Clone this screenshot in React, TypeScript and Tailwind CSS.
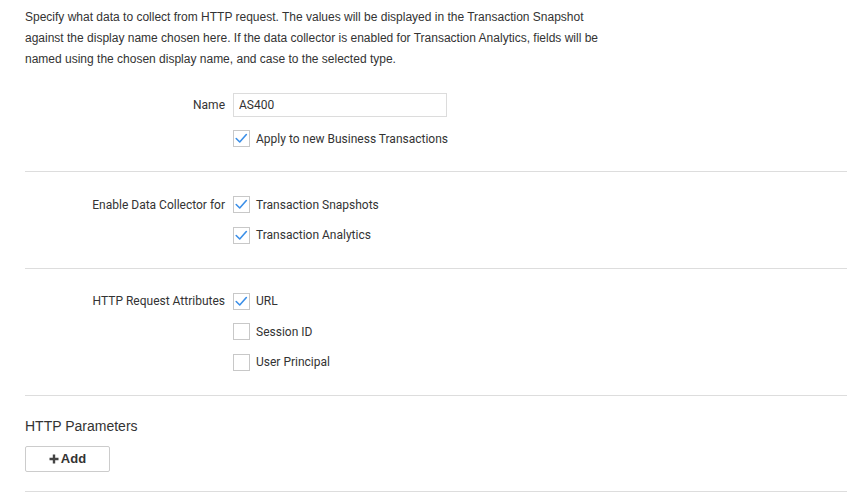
import { useState } from "react";

const LABEL = "w-[208px] shrink-0 pr-2 text-right text-[12px] text-[#333]";

function Check({ checked, label }: { checked: boolean; label: string }) {
  const [on, setOn] = useState(checked);
  return (
    <label className="flex h-[17px] cursor-pointer items-center gap-[6px]" onClick={() => setOn((v) => !v)}>
      <span className="flex h-[17px] w-[17px] shrink-0 items-center justify-center border border-[#c8c8c8] bg-white">
        {on && (
          <svg viewBox="0 0 17 17" className="h-[17px] w-[17px]">
            <polyline
              points="2.5,8.5 6.5,12.5 14,4"
              fill="none"
              stroke="#3b8fe8"
              strokeWidth={1.8}
              strokeLinecap="round"
              strokeLinejoin="round"
            />
          </svg>
        )}
      </span>
      <span className="text-[12px] text-[#333]">{label}</span>
    </label>
  );
}

function Section({ label, items }: { label: string; items: [string, boolean][] }) {
  return (
    <div className="flex border-t border-[#dddddd] pb-[24px] pt-[24px]">
      <div className={`${LABEL} flex h-[17px] items-center justify-end`}>{label}</div>
      <div className="flex flex-col gap-[13.5px]">
        {items.map(([t, c]) => (
          <Check key={t} label={t} checked={c} />
        ))}
      </div>
    </div>
  );
}

export default function App() {
  return (
    <div className="min-h-[503px] bg-white pl-[25px]" style={{ fontFamily: "Roboto, 'Liberation Sans', sans-serif" }}>
      <p
        className="pt-[7px] text-[12px] leading-[21px] text-[#333]"
        style={{ fontFamily: "'Liberation Sans', Arial, sans-serif" }}
      >
        <span className="block">
          Specify what data to collect from HTTP request. The values will be displayed in the Transaction Snapshot
        </span>
        <span className="block">
          against the display name chosen here. If the data collector is enabled for Transaction Analytics, fields will be
        </span>
        <span className="block">named using the chosen display name, and case to the selected type.</span>
      </p>

      <div className="pb-[24px] pt-[23px]">
        <div className="flex items-center">
          <div className={LABEL}>Name</div>
          <input
            defaultValue="AS400"
            className="h-[24px] w-[214px] border border-[#dcdcdc] px-[5px] text-[12px] text-[#333] outline-none"
          />
        </div>
        <div className="mt-[13px] flex">
          <div className="w-[208px] shrink-0" />
          <Check label="Apply to new Business Transactions" checked />
        </div>
      </div>

      <Section
        label="Enable Data Collector for"
        items={[
          ["Transaction Snapshots", true],
          ["Transaction Analytics", true],
        ]}
      />

      <Section
        label="HTTP Request Attributes"
        items={[
          ["URL", true],
          ["Session ID", false],
          ["User Principal", false],
        ]}
      />

      <div className="border-t border-[#dddddd] pb-[19px] pt-[21px]" style={{ fontFamily: "'Liberation Sans', Arial, sans-serif" }}>
        <h3 className="text-[14px] leading-[18px] text-[#333]">HTTP Parameters</h3>
        <button className="mt-[11px] flex h-[26px] w-[85px] items-center justify-center gap-[2px] rounded-[2px] border border-[#cccccc] bg-white text-[13px] font-bold text-[#333]">
          <svg viewBox="0 0 10 10" className="h-[10px] w-[10px]">
            <path d="M5 0.5V9.5M0.5 5H9.5" stroke="#444" strokeWidth={2.4} />
          </svg>
          Add
        </button>
      </div>
      <div className="border-t border-[#dddddd]" />
    </div>
  );
}
